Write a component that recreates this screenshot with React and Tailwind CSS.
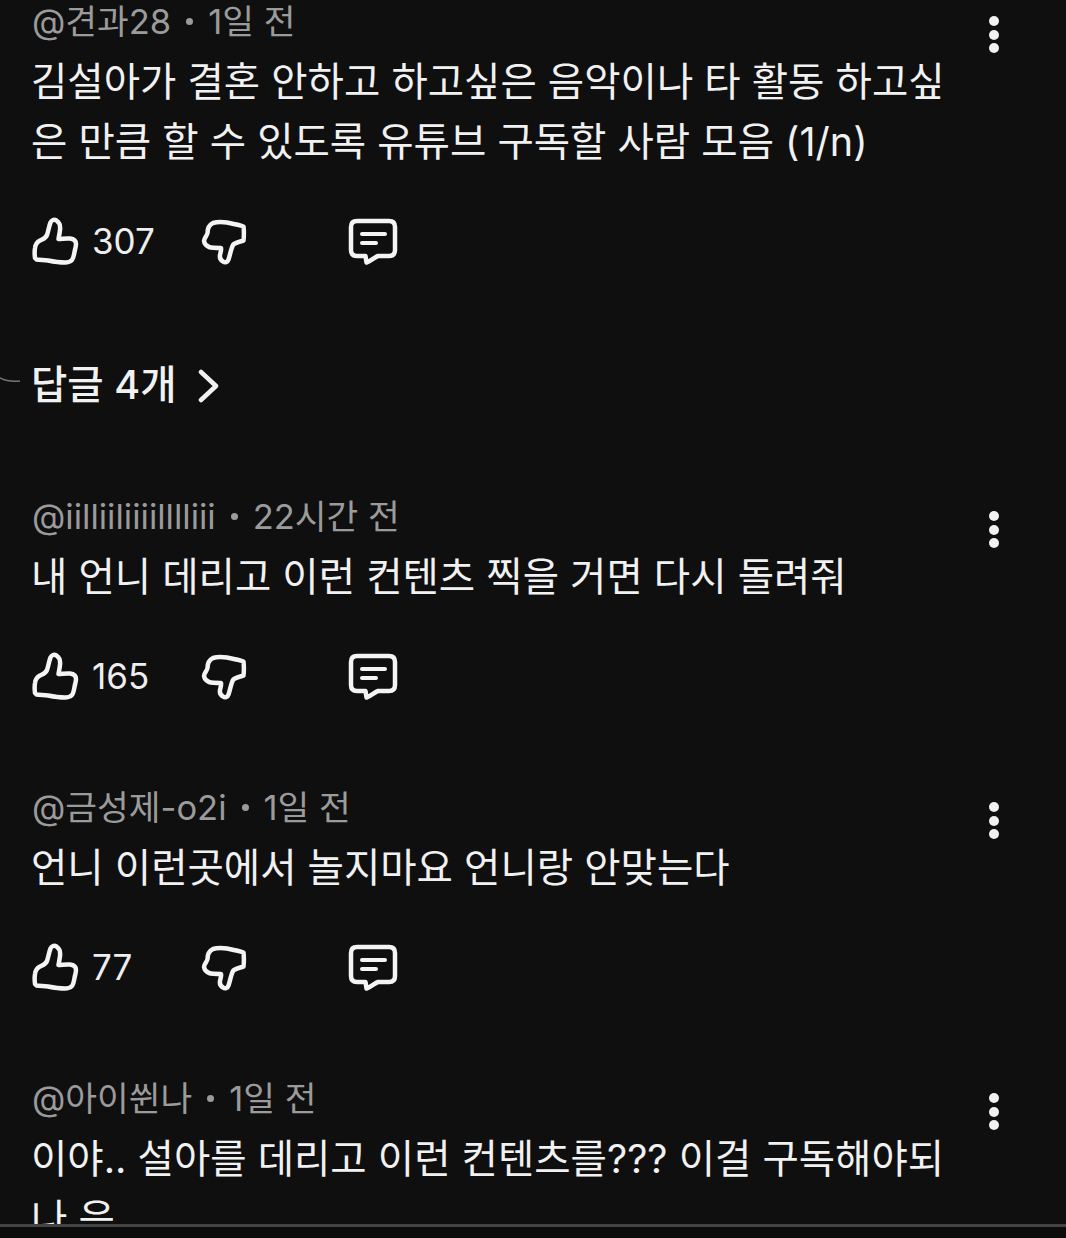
const ThumbUp = () => (
  <svg width="48" height="48" viewBox="0 0 48 48" fill="none" stroke="#f4f4f4" strokeWidth="4.5" strokeLinejoin="round" strokeLinecap="round">
    <path d="M3 41 C2.5 37 2.5 34 3 31 C3.5 27 5 25 8 23.5 C11 22 13.5 21.5 15 18 C16.5 14 17 9 18.5 5.5 C19.5 3 22 2 24.5 3.5 C27.5 5.5 28.5 9 28 13 C27.7 16 27 19 26.5 22 C30 22 34 21 38 21.5 C42 22 44 24 44 27 C44 30 43 32 42.5 35 C42 38 41.5 41 40 43 C38 45 35.5 45.5 33 45.5 C27 45.5 21 44.5 16 43.5 C11 43 7 43 4.5 42.5 Z" />
  </svg>
);

const ThumbDown = () => (
  <svg width="48" height="48" viewBox="0 0 48 48" fill="none" stroke="#f4f4f4" strokeWidth="4.5" strokeLinejoin="round" strokeLinecap="round">
    <path d="M4 24 C4 21 7 19 7.5 16 C7.5 11 9 8 13 6 C18 4.5 23 5 27 5.5 C32 6.5 38 7.5 43.5 9.5 C44 14 44 19 43.5 23.5 C39 25 35 25.5 33 28 C31 32 30 38 28.5 42.5 C27.5 45.5 25 46 23 44.5 C20 43 19.5 41 20 38 C20.5 35.5 21.5 33 21 31 C17 31 12 31 9 30 C6 29 4.5 27 4 24 Z" />
  </svg>
);

const CommentIcon = () => (
  <svg width="52" height="48" viewBox="0 0 52 48" fill="none" stroke="#f4f4f4" strokeWidth="4.5" strokeLinejoin="round" strokeLinecap="round">
    <path d="M9 4 H41 C45 4 47 6 47 10 V33 C47 37 45 39 41 39 H30 C27 40 23 44 18.5 45.5 L17.5 39 H9 C5 39 3 37 3 33 V10 C3 6 5 4 9 4 Z" />
    <path d="M14 17 H37" strokeWidth="4" />
    <path d="M14 26 H28" strokeWidth="4" />
  </svg>
);

const Comment = ({ author, time, lines, likes, className, children }) => {
  return (
    <div className={`flex ${className}`}>
      <div className="w-[928px]">
        <div className="flex items-center gap-[15px] h-[61px] text-[34.5px] text-[#9b9b9b]">
          <span>{author}</span>
          <span className="w-[7px] h-[7px] rounded-full bg-[#9b9b9b]"></span>
          <span>{time}</span>
        </div>
        <p className="-ml-px text-[39.5px] leading-[60px] text-[#f1f1f1]">{lines}</p>
        {likes && (
          <div className="flex items-center mt-[45px]">
            <div className="flex items-center w-[168px] gap-[12px]">
              <ThumbUp />
              <span className="text-[35px] leading-none text-[#eeeeee]">{likes}</span>
            </div>
            <ThumbDown />
            <div className="ml-[100px]">
              <CommentIcon />
            </div>
          </div>
        )}
        {children}
      </div>
      <div className="flex flex-col gap-[3.5px] ml-[29px] pt-[25px]">
        <span className="w-[10px] h-[10px] rounded-full bg-[#f1f1f1]"></span>
        <span className="w-[10px] h-[10px] rounded-full bg-[#f1f1f1]"></span>
        <span className="w-[10px] h-[10px] rounded-full bg-[#f1f1f1]"></span>
      </div>
    </div>
  );
};

function App() {
  return (
    <div
      className="relative h-[1238px] overflow-hidden bg-[#0f0f10] pl-[32px]"
      style={{ fontFamily: 'Inter, "Noto Sans CJK KR", sans-serif' }}
    >
      <Comment
        className="-mt-[9px]"
        author="@견과28"
        time="1일 전"
        lines="김설아가 결혼 안하고 하고싶은 음악이나 타 활동 하고싶은 만큼 할 수 있도록 유튜브 구독할 사람 모음 (1/n)"
        likes="307"
      >
        <div className="flex items-center gap-[22px] mt-[91px] h-[60px] text-[39.5px] font-medium text-[#f1f1f1]">
          <span className="-ml-px">답글 4개</span>
          <svg width="22" height="34" viewBox="0 0 22 34" fill="none" stroke="#f1f1f1" strokeWidth="4.5" strokeLinecap="round" strokeLinejoin="round">
            <path d="M3 3 L18 17 L3 31" />
          </svg>
        </div>
      </Comment>

      <Comment
        className="mt-[70px]"
        author="@iilliiliiiilllliii"
        time="22시간 전"
        lines="내 언니 데리고 이런 컨텐츠 찍을 거면 다시 돌려줘"
        likes="165"
      />
      <Comment
        className="mt-[77px]"
        author="@금성제-o2i"
        time="1일 전"
        lines="언니 이런곳에서 놀지마요 언니랑 안맞는다"
        likes="77"
      />
      <Comment
        className="mt-[77px]"
        author="@아이쒼나"
        time="1일 전"
        lines="이야.. 설아를 데리고 이런 컨텐츠를??? 이걸 구독해야되나 음"
      />

      {/* stray mark on the left edge */}
      <svg className="absolute left-0 top-[376px]" width="22" height="10" viewBox="0 0 22 10" fill="none" stroke="#777777" strokeWidth="1.5">
        <path d="M0 2 C6 5 12 6 20 5" />
      </svg>

      <div className="absolute left-0 right-0 bottom-0 h-[14px] bg-[#0c0c0d] border-t-[3px] border-[#444444]"></div>
    </div>
  );
}

export default App;
